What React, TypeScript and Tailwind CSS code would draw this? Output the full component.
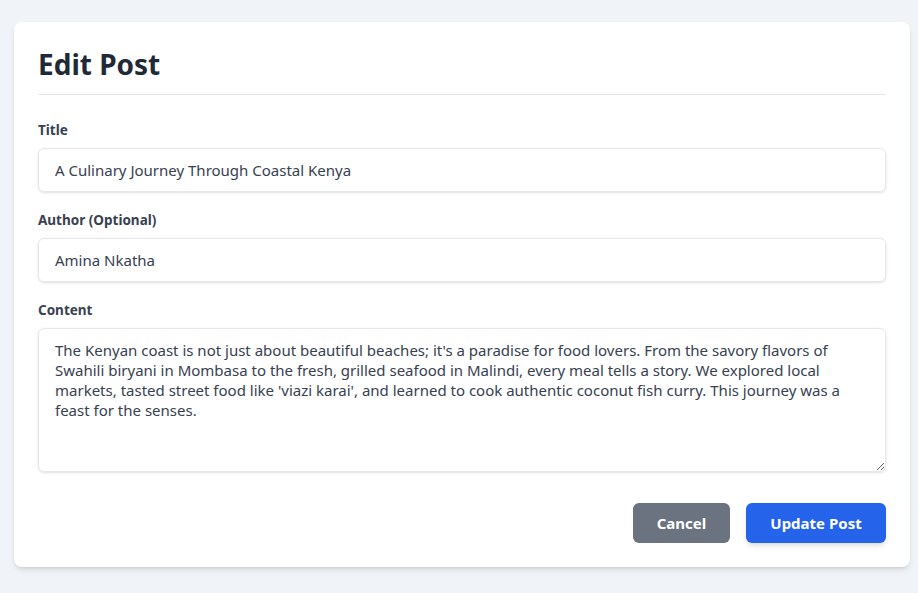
import React from "react";

export default function App() {
  const font = { fontFamily: '"Noto Sans", "Open Sans", sans-serif' };
  return (
    <div className="min-h-[593px] bg-[#f0f3f8] pt-[22px] pl-[14px]" style={font}>
      <div className="w-[896px] rounded-lg bg-white p-6 shadow-md">
        <h1 className="border-b border-[#e5e7eb] pb-3 pt-[1px] text-[28px] font-bold leading-[35px] text-[#1f2937]">
          Edit Post
        </h1>
        <div className="mt-[25px] flex flex-col gap-[18px]">
          <div>
            <label className="mb-2 block text-[13.5px] font-bold leading-5 text-[#374151]">Title</label>
            <input
              className="block h-[44px] w-full rounded-md border border-[#e5e7eb] px-4 text-[15px] text-[#374151] shadow-sm outline-none"
              defaultValue="A Culinary Journey Through Coastal Kenya"
            />
          </div>
          <div>
            <label className="mb-2 block text-[13.5px] font-bold leading-5 text-[#374151]">Author (Optional)</label>
            <input
              className="block h-[44px] w-full rounded-md border border-[#e5e7eb] px-4 text-[15px] text-[#374151] shadow-sm outline-none"
              defaultValue="Amina Nkatha"
            />
          </div>
          <div>
            <label className="mb-2 block text-[13.5px] font-bold leading-5 text-[#374151]">Content</label>
            <textarea
              className="block h-[144px] w-full rounded-md border border-[#e5e7eb] px-4 pb-3 pt-[11px] text-[15px] leading-5 text-[#374151] shadow-sm outline-none"
              defaultValue="The Kenyan coast is not just about beautiful beaches; it's a paradise for food lovers. From the savory flavors of Swahili biryani in Mombasa to the fresh, grilled seafood in Malindi, every meal tells a story. We explored local markets, tasted street food like 'viazi karai', and learned to cook authentic coconut fish curry. This journey was a feast for the senses."
            />
          </div>
        </div>
        <div className="mt-[31px] flex justify-end gap-4">
          <button className="h-10 w-[97px] rounded-md bg-[#6b7280] text-[15px] font-bold text-white">Cancel</button>
          <button className="h-10 w-[140px] rounded-md bg-[#2563eb] text-[15px] font-bold text-white shadow-md">Update Post</button>
        </div>
      </div>
    </div>
  );
}
